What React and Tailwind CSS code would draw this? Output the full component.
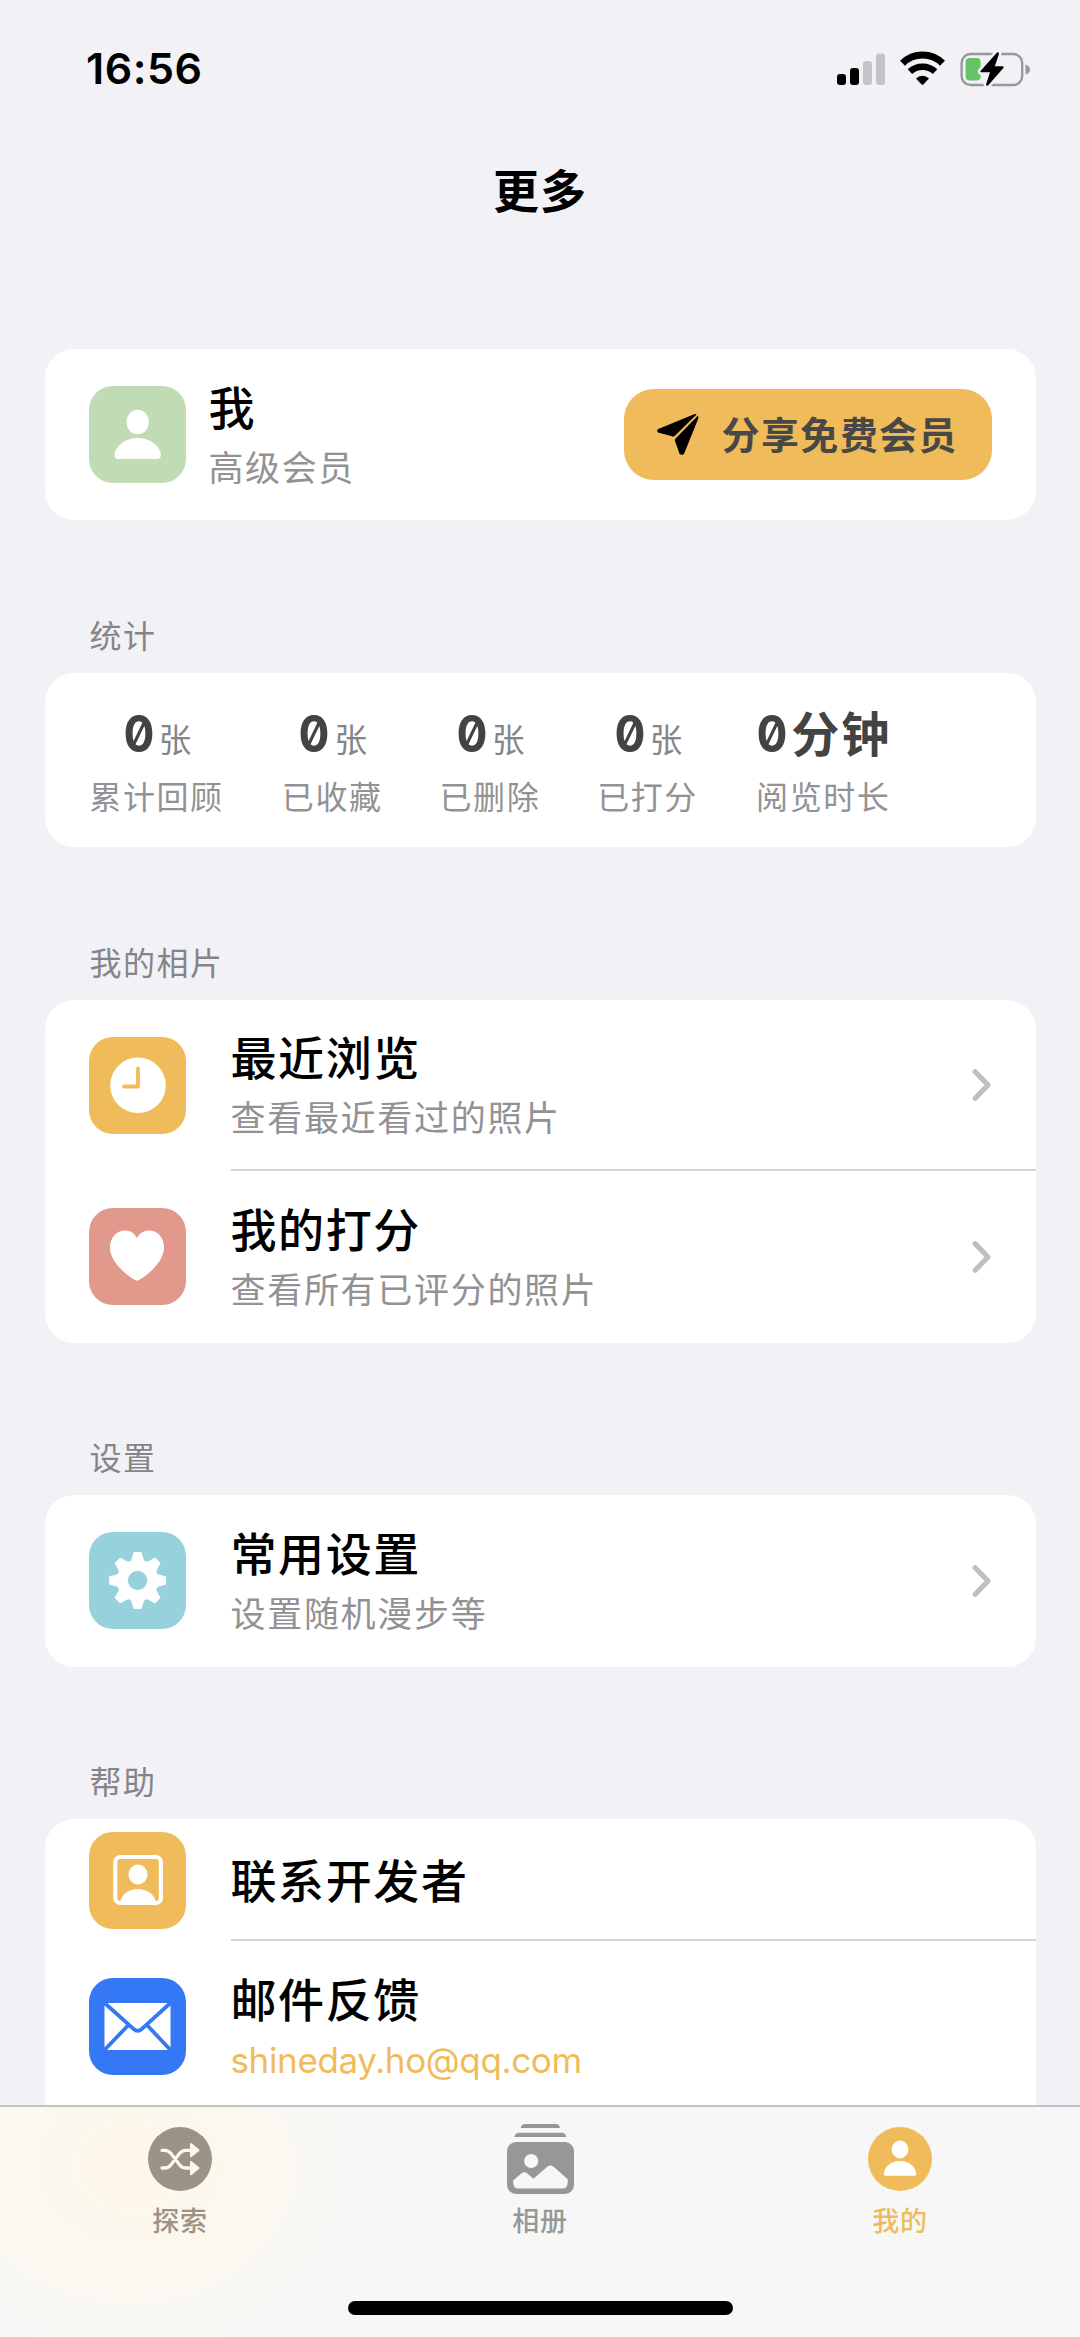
const StatusIcons = () => (
  <svg width="196" height="36" viewBox="0 0 196 36" fill="none">
    <rect x="1" y="23" width="9" height="11" rx="3" fill="#000" />
    <rect x="14" y="17" width="9" height="17" rx="3" fill="#000" />
    <rect x="27" y="10" width="9" height="24" rx="3" fill="#c4c4c8" />
    <rect x="40" y="2.5" width="9" height="31.5" rx="3" fill="#c4c4c8" />

    <path d="M66.5 12.2A28.5 28.5 0 0 1 106.5 12.2" stroke="#000" strokeWidth="7" />
    <path d="M73.9 20.6A18.6 18.6 0 0 1 99.1 20.6" stroke="#000" strokeWidth="6.6" />
    <path d="M80 27.4A9.4 9.4 0 0 1 93 27.4L87.6 33.2Q86.5 34.4 85.4 33.2Z" fill="#000" />

    <rect x="125.6" y="3" width="60.6" height="31" rx="9" stroke="#98989c" strokeWidth="2.4" />
    <path d="M189.5 13.5Q194 15 194 18.5T189.5 23.5Z" fill="#98989c" />
    <rect x="129.6" y="7" width="15" height="22.5" rx="4" fill="#65c466" />
    <path
      d="M161 1.5L144.5 20Q143.8 21.3 145.2 21.3H154L150 33.5Q150.5 35.8 152.5 34L167.6 16.8Q168.3 15.3 166.5 15.3H158.8L163 3Q162.8.4 161 1.5Z"
      fill="#000"
      stroke="#f2f1f6"
      strokeWidth="5"
      paintOrder="stroke"
      strokeLinejoin="round"
    />
  </svg>
)

const PersonGlyph = () => (
  <g fill="#fff">
    <ellipse cx="48.7" cy="36" rx="11.1" ry="12.2" />
    <path d="M48.7 52C63 52 71.8 62 71.8 69.3Q71.8 73 68 73H29.4Q25.6 73 25.6 69.3C25.6 62 34.4 52 48.7 52Z" />
  </g>
)

const ClockGlyph = () => (
  <g>
    <circle cx="49" cy="48.3" r="27.8" fill="#fff" />
    <path d="M49 31.5V49.5H35" fill="none" stroke="#f0bb5a" strokeWidth="3.8" strokeLinecap="round" strokeLinejoin="round" />
  </g>
)

const HeartGlyph = () => (
  <path
    d="M48 72.8C45.5 72.8 21 57 21 39.5C21 29.5 27.8 22.5 36 22.5C41.5 22.5 45.8 25.5 48 30C50.2 25.5 54.6 22.5 60.2 22.5C68.6 22.5 75 29.5 75 39.5C75 57 50.5 72.8 48 72.8Z"
    fill="#fff"
  />
)

const GearGlyph = () => (
  <g transform="translate(48.6 48.5)">
    {[0, 45, 90, 135, 180, 225, 270, 315].map((deg) => (
      <path
        key={deg}
        d="M-3.2-27.5H3.2L5.4-20L8-16H-8L-5.4-20Z"
        transform={`rotate(${deg})`}
        fill="#fff"
        stroke="#fff"
        strokeWidth="2"
        strokeLinejoin="round"
      />
    ))}
    <circle r="15.2" fill="none" stroke="#fff" strokeWidth="11" />
  </g>
)

const ContactGlyph = () => (
  <g>
    <rect x="26.3" y="25" width="45.6" height="46" rx="5" fill="none" stroke="#fff" strokeWidth="4.2" />
    <ellipse cx="49" cy="42.5" rx="9.5" ry="10" fill="#fff" />
    <path d="M31 70C33 62 40 57 49 57S65 62 67 70Z" fill="#fff" />
  </g>
)

const MailGlyph = () => (
  <g>
    <rect x="15.5" y="25" width="66" height="47" rx="3.5" fill="#fff" />
    <path
      d="M15 24.5L44.5 50.8Q48.7 54.8 52.9 50.8L82 24.5M15 72.5L39 47.5M82 72.5L58.4 47.5"
      fill="none"
      stroke="#3478f6"
      strokeWidth="3.8"
    />
  </g>
)

const SendIcon = () => (
  <svg width="42" height="42" viewBox="0 0 42 42" fill="#000">
    <path d="M1.3 15L36.5.5Q38.8-.3 39.6.6L17.4 22.2Q16.2 23 15 22.2L1 18.4Q-.8 16.2 1.3 15Z" />
    <path d="M40.8 1.8Q41.8 3 41 5.2L27.2 39.5Q25 42.4 22.4 39.6L18 27Q17.6 25.8 18.6 24.6Z" />
  </svg>
)

const Chevron = () => (
  <svg width="20" height="34" viewBox="0 0 20 34" fill="none">
    <path d="M3.2 3.8L16 17L3.2 30.2" stroke="#bfbfc1" strokeWidth="5.2" strokeLinecap="round" strokeLinejoin="round" />
  </svg>
)

const ShuffleTabIcon = () => (
  <svg width="64" height="64" viewBox="0 0 64 64" fill="none">
    <circle cx="32" cy="32" r="32" fill="#9b9385" />
    <path
      d="M14 23.4H17Q20.5 23.4 23 26.6L31.5 37.8Q34 41 37.5 41H43M14 41H17Q20.5 41 23 37.8L31.5 26.6Q34 23.4 37.5 23.4H43"
      stroke="#fcf8ee"
      strokeWidth="3.3"
      strokeLinecap="round"
    />
    <path
      d="M43 17L50.5 23.2L43 29.2ZM43 35L50.5 41L43 47.2Z"
      fill="#fcf8ee"
      stroke="#fcf8ee"
      strokeWidth="2"
      strokeLinejoin="round"
    />
  </svg>
)

const AlbumTabIcon = () => (
  <svg width="67" height="70" viewBox="0 0 67 70" fill="#979797">
    <path d="M13.7 4.1Q14.5 0 18 0H49Q52.3 0 53 4.1Z" />
    <path d="M7.2 12.9Q8.5 8.7 12 8.7H55Q58.2 8.7 59.3 12.9Z" />
    <rect x="0" y="18" width="67" height="52" rx="9" />
    <circle cx="24.2" cy="37" r="7.1" fill="#f7f7f7" />
    <path
      d="M6.2 56.5L14.5 49.3Q17.4 47 20.3 49.5L26.5 54.8L40.3 42.8Q43.7 40.2 47 43L60.7 55.2V58.5Q60.7 64.6 55 64.6H12Q6.2 64.6 6.2 59Z"
      fill="#f7f7f7"
    />
  </svg>
)

const MeTabIcon = () => (
  <svg width="64" height="64" viewBox="0 0 64 64">
    <circle cx="32" cy="32" r="32" fill="#f0bb5a" />
    <ellipse cx="32" cy="22.4" rx="8.3" ry="9" fill="#fff" />
    <path d="M32 34C42 34 48.2 40.8 48.2 47Q48.2 48.8 46.8 48.8H17.2Q15.8 48.8 15.8 47C15.8 40.8 22 34 32 34Z" fill="#fff" />
  </svg>
)

const IconTile = ({ className, children }) => (
  <svg width="97" height="97" viewBox="0 0 97 97" className={`shrink-0 rounded-[24px] ${className}`}>
    {children}
  </svg>
)

const SectionLabel = ({ children }) => (
  <h2 className="flex h-[152.5px] items-end pb-[14px] pl-[45px] text-[32px] leading-[44px] tracking-[1.5px] text-[#858589]">
    {children}
  </h2>
)

const Row = ({ tile, glyph, title, subtitle, subtitleClass = 'tracking-[1.7px] text-[#929295]', arrow, divider, height = 'h-[171.5px]' }) => (
  <div className={`flex items-center pl-[44px] ${height}`}>
    <IconTile className={tile}>{glyph}</IconTile>
    <div className={`ml-[45px] flex h-full flex-1 items-center justify-between pr-[44px] ${divider ? 'border-b-2 border-[#d4d4d6] pt-[2px]' : ''}`}>
      <div className={subtitle ? 'pt-[6px]' : 'pt-[2px]'}>
        <p className="text-[46px] font-medium leading-[60px] tracking-[1.6px] text-black">{title}</p>
        {subtitle && <p className={`text-[35px] leading-[60px] ${subtitleClass}`}>{subtitle}</p>}
      </div>
      {arrow && <Chevron />}
    </div>
  </div>
)

const stats = [
  { label: '累计回顾', unit: '张', width: 'w-[135px]' },
  { label: '已收藏', unit: '张', width: 'w-[99px]' },
  { label: '已删除', unit: '张', width: 'w-[99px]' },
  { label: '已打分', unit: '张', width: 'w-[99px]' },
  { label: '阅览时长', unit: '分钟', width: 'w-[135px]', large: true },
]

const tabs = [
  { label: '探索', icon: <ShuffleTabIcon />, color: 'text-[#9b9385]' },
  { label: '相册', icon: <AlbumTabIcon />, color: 'text-[#979797]' },
  { label: '我的', icon: <MeTabIcon />, color: 'text-[#f0bb5a]' },
]

const App = () => {
  return (
    <div className="flex h-[2337px] w-[1080px] flex-col overflow-hidden bg-[#f2f1f6] font-['Inter','Noto_Sans_CJK_SC',sans-serif]">
      <div className="flex h-[2105px] shrink-0 flex-col overflow-hidden">
        <div className="flex h-[137px] shrink-0 items-center justify-between pl-[86px] pr-[48px]">
          <span className="text-[43px] font-semibold leading-none tracking-[0.5px] text-black">16:56</span>
          <StatusIcons />
        </div>
        <h1 className="h-[212px] shrink-0 pt-[22px] text-center text-[46px] font-semibold leading-[64px] tracking-[1px] text-black">更多</h1>

        <main className="px-[44.5px]">
          <section className="flex h-[171px] items-center rounded-[29px] bg-white px-[44px]">
            <IconTile className="bg-[#c1dcb5]">
              <PersonGlyph />
            </IconTile>
            <div className="ml-[23px] flex-1 pt-[6px]">
              <p className="text-[46px] font-medium leading-[60px] text-black">我</p>
              <p className="text-[35px] leading-[60px] tracking-[1.6px] text-[#929295]">高级会员</p>
            </div>
            <button className="flex h-[91px] w-[368px] items-center rounded-[30px] bg-[#f0bb5a] pl-[33px]">
              <SendIcon />
              <span className="ml-[23px] text-[38px] font-semibold leading-none tracking-[1.4px] text-[#4a4846]">分享免费会员</span>
            </button>
          </section>

          <SectionLabel>统计</SectionLabel>
          <section className="flex h-[174.5px] gap-[58.7px] rounded-[29px] bg-white pl-[44.5px] pt-[28px]">
            {stats.map((s) => (
              <div key={s.label} className={`flex flex-col items-center whitespace-nowrap ${s.width}`}>
                <div className="flex h-[66px] items-baseline">
                  <span className="inline-block w-[32px] scale-x-90 text-center text-[51px] font-bold leading-[66px] text-[#434343] slashed-zero">
                    0
                  </span>
                  {s.large ? (
                    <span className="ml-[4px] text-[48px] font-semibold leading-[66px] tracking-[2px] text-[#434343]">{s.unit}</span>
                  ) : (
                    <span className="ml-[5px] text-[32.5px] leading-[64px] text-[#858589]">{s.unit}</span>
                  )}
                </div>
                <p className="mt-[9px] text-[32px] leading-[44px] tracking-[1.6px] text-[#929295]">{s.label}</p>
              </div>
            ))}
          </section>

          <SectionLabel>我的相片</SectionLabel>
          <section className="rounded-[29px] bg-white">
            <Row tile="bg-[#f0bb5a]" glyph={<ClockGlyph />} title="最近浏览" subtitle="查看最近看过的照片" arrow divider />
            <Row tile="bg-[#e1998b]" glyph={<HeartGlyph />} title="我的打分" subtitle="查看所有已评分的照片" arrow />
          </section>

          <SectionLabel>设置</SectionLabel>
          <section className="rounded-[29px] bg-white">
            <Row tile="bg-[#97d2dc]" glyph={<GearGlyph />} title="常用设置" subtitle="设置随机漫步等" arrow />
          </section>

          <SectionLabel>帮助</SectionLabel>
          <section className="rounded-t-[29px] bg-white">
            <Row tile="bg-[#f0bb5a]" glyph={<ContactGlyph />} title="联系开发者" divider height="h-[122px]" />
            <Row
              tile="bg-[#3478f6]"
              glyph={<MailGlyph />}
              title="邮件反馈"
              subtitle="shineday.ho@qq.com"
              subtitleClass="tracking-[-0.35px] text-[#f0bb5a]"
            />
          </section>
        </main>
      </div>

      <nav className="flex flex-1 flex-col items-center border-t-2 border-[#c3c3c3] bg-[#f7f7f7] bg-[radial-gradient(ellipse_240px_200px_at_130px_60px,#fef7e9_0%,#fbf8f0_55%,#f7f7f700_100%)]">
        <div className="grid w-full grid-cols-3 pt-[17px]">
          {tabs.map((t) => (
            <div key={t.label} className={`flex flex-col items-center ${t.color}`}>
              <div className="flex h-[70px] items-center">{t.icon}</div>
              <span className="mt-[8px] text-[27px] font-medium leading-[40px] tracking-[0.8px]">{t.label}</span>
            </div>
          ))}
        </div>
        <div className="mt-[59px] h-[14px] w-[385px] rounded-full bg-black" />
      </nav>
    </div>
  )
}

export default App
